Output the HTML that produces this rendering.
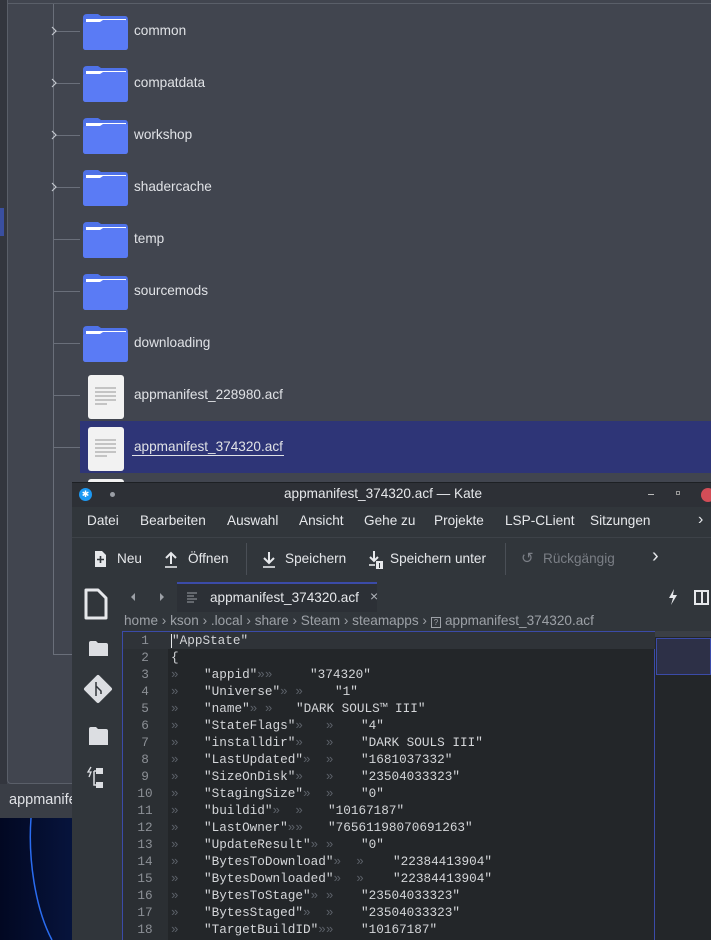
<!DOCTYPE html>
<html><head><meta charset="utf-8"><style>
*{margin:0;padding:0;box-sizing:border-box}
body{width:711px;height:940px;overflow:hidden;background:#41454f;font-family:"Liberation Sans","DejaVu Sans",sans-serif;position:relative;color:#dfe1e5}
.abs{position:absolute;white-space:nowrap}
.t{font-size:13.6px;color:#e0e2e6}
.doc{position:absolute;width:36px;height:44px;background:#f2f2f2;border-radius:3px}
.doc i{position:absolute;left:7px;height:2px;background:#c4c4c4;width:21px}
.code{font-family:"Liberation Mono","DejaVu Sans Mono",monospace;font-size:12.7px;color:#d4d6d9;white-space:pre}
.code div{position:absolute}
.ln{left:122px;width:46px;text-align:center;color:#8c9096}
.g{color:#5b6068}
.m span{position:absolute}
</style></head><body>
<div class="abs" style="left:0;top:0;width:7px;height:818px;background:#33363e"></div>
<div class="abs" style="left:0;top:208px;width:4px;height:28px;background:#3a4fa0"></div>
<div class="abs" style="left:7px;top:0;width:704px;height:784px;border-left:1px solid #5a5f69;border-bottom:1px solid #5a5f69;border-bottom-left-radius:4px"></div>
<div class="abs" style="left:7px;top:0;width:704px;height:4px;border-bottom:1px solid #5a5f69"></div>
<div class="abs" style="left:53px;top:4px;width:1px;height:651px;background:#6a6f7a"></div>
<div class="abs" style="left:53px;top:654px;width:20px;height:1px;background:#6a6f7a"></div>
<div class="abs" style="left:0;top:784px;width:80px;height:34px;background:#3a3e46"></div>
<div class="abs" style="left:9px;top:792px;font-size:14.5px;color:#e0e2e6">appmanife</div>
<div class="abs" style="left:0;top:818px;width:80px;height:122px;background:linear-gradient(90deg,#020822,#07153f)"></div>
<svg class="abs" style="left:0;top:818px" width="80" height="122"><path d="M31 0 C28 40 35 90 52 122" stroke="#2a6cf0" stroke-width="1.5" fill="none"/></svg>

<div class="abs" style="left:80px;top:421px;width:631px;height:52px;background:#2e3577"></div>

<svg class="abs" style="left:0;top:0" width="711" height="480">
<defs><g id="f"><path d="M0 4 Q0 0 4 0 H15 L18 2 H42 Q45 2 45 6 V33 Q45 36 42 36 H3 Q0 36 0 33Z" fill="#4f72e8"/><path d="M3 5 H43 V10 H3Z" fill="#fff"/><path d="M0 10 Q0 8 3 8 H17 L20 6 H42 Q45 6 45 9 V33 Q45 36 42 36 H3 Q0 36 0 33Z" fill="#5a7bf5"/></g></defs>
<g transform="translate(83,14)"><use href="#f"/></g>
<g transform="translate(83,66)"><use href="#f"/></g>
<g transform="translate(83,118)"><use href="#f"/></g>
<g transform="translate(83,170)"><use href="#f"/></g>
<g transform="translate(83,222)"><use href="#f"/></g>
<g transform="translate(83,274)"><use href="#f"/></g>
<g transform="translate(83,326)"><use href="#f"/></g>
<g stroke="#6a6f7a"><line x1="56" y1="31.5" x2="80" y2="31.5"/><line x1="56" y1="83.5" x2="80" y2="83.5"/><line x1="56" y1="135.5" x2="80" y2="135.5"/><line x1="56" y1="187.5" x2="80" y2="187.5"/><line x1="53" y1="239.5" x2="80" y2="239.5"/><line x1="53" y1="291.5" x2="80" y2="291.5"/><line x1="53" y1="343.5" x2="80" y2="343.5"/><line x1="53" y1="395.5" x2="80" y2="395.5"/><line x1="53" y1="447.5" x2="80" y2="447.5"/></g>
<g stroke="#c4c8cf" fill="none" stroke-width="1.2"><path d="M52 27 l4 4 l-4 4"/><path d="M52 79 l4 4 l-4 4"/><path d="M52 131 l4 4 l-4 4"/><path d="M52 183 l4 4 l-4 4"/></g>
</svg>
<div class="abs t" style="left:134px;top:23px">common</div>
<div class="abs t" style="left:134px;top:75px">compatdata</div>
<div class="abs t" style="left:134px;top:127px">workshop</div>
<div class="abs t" style="left:134px;top:179px">shadercache</div>
<div class="abs t" style="left:134px;top:231px">temp</div>
<div class="abs t" style="left:134px;top:283px">sourcemods</div>
<div class="abs t" style="left:134px;top:335px">downloading</div>
<div class="abs t" style="left:134px;top:387px">appmanifest_228980.acf</div>
<div class="abs t" style="left:132px;top:439px;border-bottom:1px solid #e0e2e6;padding:0 1px 1px 2px">appmanifest_374320.acf</div>
<div class="doc" style="left:88px;top:375px"><i style="top:12px"></i><i style="top:16px"></i><i style="top:20px"></i><i style="top:24px"></i><i style="top:28px;width:12px"></i></div>
<div class="doc" style="left:88px;top:427px"><i style="top:12px"></i><i style="top:16px"></i><i style="top:20px"></i><i style="top:24px"></i><i style="top:28px;width:12px"></i></div>
<div class="doc" style="left:88px;top:479px;height:10px"></div>

<!-- Kate window -->
<div class="abs" style="left:72px;top:482px;width:639px;height:458px;background:#31363b;border-top:1px solid #1d2024"></div>
<div class="abs" style="left:72px;top:483px;width:639px;height:24px;background:#2d3036"></div>
<div class="abs" style="left:79px;top:488px;width:13px;height:13px;border-radius:50%;background:#1d99f3;color:#fff;font-size:9px;text-align:center;line-height:13px">✱</div>
<div class="abs" style="left:110px;top:492px;width:5px;height:5px;border-radius:50%;background:#9a9ea5"></div>
<div class="abs" style="left:284px;top:486px;font-size:13.6px;color:#e6e8eb">appmanifest_374320.acf — Kate</div>
<div class="abs" style="left:648px;top:494px;width:6px;height:1px;background:#bbb"></div>
<div class="abs" style="left:676px;top:491px;width:4px;height:4px;border:1px solid #999"></div>
<div class="abs" style="left:701px;top:488px;width:14px;height:14px;border-radius:50%;background:#d24d57"></div>
<div class="abs m t" style="left:0;top:513px;color:#e6e8eb"><span style="left:87px">Datei</span><span style="left:140px">Bearbeiten</span><span style="left:227px">Auswahl</span><span style="left:299px">Ansicht</span><span style="left:364px">Gehe zu</span><span style="left:434px">Projekte</span><span style="left:505px">LSP-CLient</span><span style="left:590px">Sitzungen</span><span style="left:698px;font-size:16px;top:-2px">›</span></div>
<div class="abs" style="left:72px;top:537px;width:639px;height:1px;background:#3d4248"></div>
<svg class="abs" style="left:90px;top:548px" width="300" height="22">
<path d="M5 3 H12 L16 7 V19 H5Z" fill="#e6e8eb"/><path d="M10.5 8 V15 M7 11.5 H14" stroke="#31363b" stroke-width="1.6"/>
<path d="M81 16 V5 M76 10 L81 5 L86 10" stroke="#e6e8eb" stroke-width="2" fill="none"/><path d="M75 19 H87" stroke="#e6e8eb" stroke-width="1.6"/>
<path d="M179 4 V15 M174 10 L179 15 L184 10" stroke="#e6e8eb" stroke-width="2" fill="none"/><path d="M173 19 H185" stroke="#e6e8eb" stroke-width="1.6"/>
<path d="M284 3 V13 M280 9 L284 13 L288 9" stroke="#e6e8eb" stroke-width="2" fill="none"/><path d="M279 17 H285" stroke="#e6e8eb" stroke-width="1.6"/><rect x="286" y="13" width="7" height="8" fill="#e6e8eb"/><path d="M289.5 15 V20" stroke="#31363b"/>
</svg>
<div class="abs t" style="left:117px;top:551px;color:#e6e8eb">Neu</div>
<div class="abs t" style="left:188px;top:551px;color:#e6e8eb">Öffnen</div>
<div class="abs" style="left:246px;top:543px;width:1px;height:32px;background:#4a4f56"></div>
<div class="abs t" style="left:285px;top:551px;color:#e6e8eb">Speichern</div>
<div class="abs t" style="left:390px;top:551px;color:#e6e8eb">Speichern unter</div>
<div class="abs" style="left:505px;top:543px;width:1px;height:32px;background:#4a4f56"></div>
<div class="abs" style="left:521px;top:549px;font-size:15px;color:#7a7e85">↺</div>
<div class="abs t" style="left:543px;top:551px;color:#7a7e85">Rückgängig</div>
<div class="abs" style="left:652px;top:545px;font-size:20px;color:#e6e8eb">›</div>
<!-- left sidebar -->
<svg class="abs" style="left:80px;top:588px" width="36" height="210">
<path d="M6 2 H18 L26 10 V30 H6Z" fill="none" stroke="#e6e8eb" stroke-width="3" stroke-linejoin="round"/>
<path d="M9 55 Q9 53 11 53 H16 L18 55 H26 Q28 55 28 57 V68 H9Z" fill="#dcdee2"/>
<path d="M18 89 L30 101 L18 113 L6 101Z" fill="#dcdee2" stroke="#dcdee2" stroke-width="4" stroke-linejoin="round"/>
<path d="M16 94 V108 M16 98 L21 103 V106" stroke="#31363b" stroke-width="1.5" fill="none"/>
<path d="M9 141 Q9 139 11 139 H16 L18 141 H26 Q28 141 28 143 V157 H9Z" fill="#dcdee2"/>
<path d="M16 180 h7 v6 h-7z M16 194 h7 v6 h-7z" fill="#dcdee2"/><path d="M14 183 v14 h2 M14 183 h2" stroke="#dcdee2" fill="none" stroke-width="1.5"/>
<path d="M11 179 l-3 5 h3 l-2 5" stroke="#dcdee2" fill="none" stroke-width="1.3"/>
</svg>
<!-- tab row -->
<svg class="abs" style="left:126px;top:590px" width="44" height="14"><path d="M9 3 L5 7 L9 11Z M34 3 L38 7 L34 11Z" fill="#9da1a7"/></svg>
<div class="abs" style="left:177px;top:582px;width:200px;height:30px;background:#2c3036;border-top:2px solid #3b4ba8"></div>
<svg class="abs" style="left:186px;top:591px" width="14" height="14"><path d="M1 2 H11 M1 5 H8 M1 8 H11 M1 11 H8" stroke="#9da1a7"/></svg>
<div class="abs t" style="left:210px;top:590px;color:#e6e8eb">appmanifest_374320.acf</div>
<div class="abs" style="left:370px;top:588px;font-size:14px;color:#b0b4ba">×</div>
<svg class="abs" style="left:666px;top:588px" width="14" height="18"><path d="M8 1 L3 10 H7 L5 17 L11 7 H7Z" fill="#e6e8eb"/></svg>
<div class="abs" style="left:694px;top:590px;width:15px;height:15px;border:2px solid #e6e8eb"></div>
<div class="abs" style="left:701px;top:590px;width:2px;height:15px;background:#e6e8eb"></div>
<div class="abs" style="left:124px;top:613px;font-size:13.6px;color:#9da1a7">home › kson › .local › share › Steam › steamapps › <span style="border:1px solid #9da1a7;font-size:8px;padding:0 2px">?</span> appmanifest_374320.acf</div>
<!-- editor -->
<div class="abs" style="left:122px;top:631px;width:533px;height:309px;background:#232629;border:1px solid #3b4ba8;border-bottom:none"></div>
<div class="abs" style="left:123px;top:632px;width:45px;height:308px;background:#2b2f33"></div>
<div class="abs" style="left:123px;top:632px;width:532px;height:17px;background:#2f3338"></div>
<div class="abs" style="left:655px;top:631px;width:56px;height:309px;background:#232629"></div>
<div class="abs" style="left:655px;top:631px;width:56px;height:6px;background:#3b3f45"></div>
<div class="abs" style="left:656px;top:638px;width:55px;height:37px;background:#2d3047;border:1px solid #3b4ba8"></div>
<div class="abs" style="left:171px;top:634px;width:1px;height:14px;background:#e6e8eb"></div>
<div class="code">
<div class="ln" style="top:633px">1</div><div style="left:172px;top:633px">"AppState"</div>
<div class="ln" style="top:650px">2</div><div style="left:171px;top:650px">{</div>
<div class="ln" style="top:667px">3</div><div style="left:171px;top:667px" class="g">»</div><div style="left:204px;top:667px">"appid"<span class="g">»»</span></div><div style="left:310px;top:667px">"374320"</div>
<div class="ln" style="top:684px">4</div><div style="left:171px;top:684px" class="g">»</div><div style="left:204px;top:684px">"Universe"<span class="g">» »</span></div><div style="left:335px;top:684px">"1"</div>
<div class="ln" style="top:701px">5</div><div style="left:171px;top:701px" class="g">»</div><div style="left:204px;top:701px">"name"<span class="g">» »</span></div><div style="left:296px;top:701px">"DARK SOULS™ III"</div>
<div class="ln" style="top:718px">6</div><div style="left:171px;top:718px" class="g">»</div><div style="left:204px;top:718px">"StateFlags"<span class="g">»   »</span></div><div style="left:361px;top:718px">"4"</div>
<div class="ln" style="top:735px">7</div><div style="left:171px;top:735px" class="g">»</div><div style="left:204px;top:735px">"installdir"<span class="g">»   »</span></div><div style="left:361px;top:735px">"DARK SOULS III"</div>
<div class="ln" style="top:752px">8</div><div style="left:171px;top:752px" class="g">»</div><div style="left:204px;top:752px">"LastUpdated"<span class="g">»  »</span></div><div style="left:361px;top:752px">"1681037332"</div>
<div class="ln" style="top:769px">9</div><div style="left:171px;top:769px" class="g">»</div><div style="left:204px;top:769px">"SizeOnDisk"<span class="g">»   »</span></div><div style="left:361px;top:769px">"23504033323"</div>
<div class="ln" style="top:786px">10</div><div style="left:171px;top:786px" class="g">»</div><div style="left:204px;top:786px">"StagingSize"<span class="g">»  »</span></div><div style="left:361px;top:786px">"0"</div>
<div class="ln" style="top:803px">11</div><div style="left:171px;top:803px" class="g">»</div><div style="left:204px;top:803px">"buildid"<span class="g">»  »</span></div><div style="left:328px;top:803px">"10167187"</div>
<div class="ln" style="top:820px">12</div><div style="left:171px;top:820px" class="g">»</div><div style="left:204px;top:820px">"LastOwner"<span class="g">»»</span></div><div style="left:328px;top:820px">"76561198070691263"</div>
<div class="ln" style="top:837px">13</div><div style="left:171px;top:837px" class="g">»</div><div style="left:204px;top:837px">"UpdateResult"<span class="g">» »</span></div><div style="left:361px;top:837px">"0"</div>
<div class="ln" style="top:854px">14</div><div style="left:171px;top:854px" class="g">»</div><div style="left:204px;top:854px">"BytesToDownload"<span class="g">»  »</span></div><div style="left:393px;top:854px">"22384413904"</div>
<div class="ln" style="top:871px">15</div><div style="left:171px;top:871px" class="g">»</div><div style="left:204px;top:871px">"BytesDownloaded"<span class="g">»  »</span></div><div style="left:393px;top:871px">"22384413904"</div>
<div class="ln" style="top:888px">16</div><div style="left:171px;top:888px" class="g">»</div><div style="left:204px;top:888px">"BytesToStage"<span class="g">» »</span></div><div style="left:361px;top:888px">"23504033323"</div>
<div class="ln" style="top:905px">17</div><div style="left:171px;top:905px" class="g">»</div><div style="left:204px;top:905px">"BytesStaged"<span class="g">»  »</span></div><div style="left:361px;top:905px">"23504033323"</div>
<div class="ln" style="top:922px">18</div><div style="left:171px;top:922px" class="g">»</div><div style="left:204px;top:922px">"TargetBuildID"<span class="g">»»</span></div><div style="left:361px;top:922px">"10167187"</div>
</div>
</body></html>
